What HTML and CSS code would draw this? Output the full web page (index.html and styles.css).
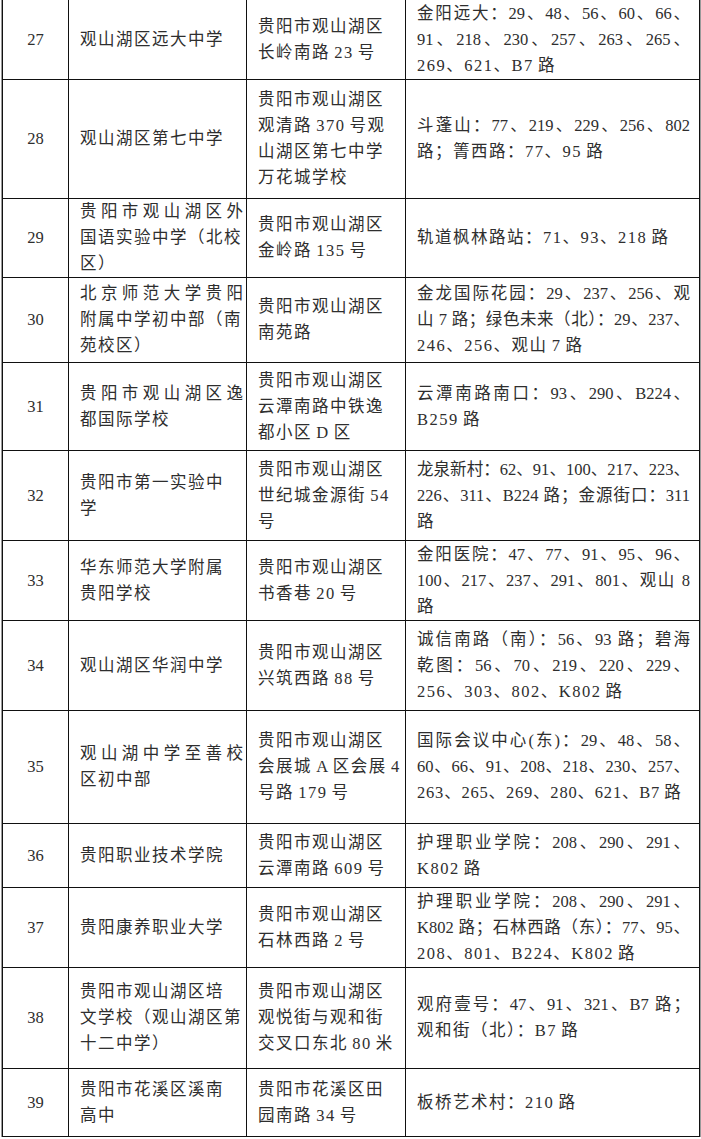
FILE: index.html
```html
<!DOCTYPE html>
<html lang="zh-CN">
<head>
<meta charset="utf-8">
<title>学校周边公交线路</title>
<link rel="stylesheet" href="styles.css">
</head>
<body>
<table class="bus">
  <colgroup>
    <col class="c-no"><col class="c-name"><col class="c-addr"><col class="c-stop">
  </colgroup>
  <tbody>
    <tr>
      <td class="no">27</td>
      <td class="name"><span>观山湖区远大中学</span></td>
      <td class="addr"><span>贵阳市观山湖区</span><span>长岭南路 23 号</span></td>
      <td class="stop"><span class="w">金阳远大：29、48、56、60、66、</span><span class="w">91、218、230、257、263、265、</span><span>269、621、B7 路</span></td>
    </tr>
    <tr>
      <td class="no">28</td>
      <td class="name"><span>观山湖区第七中学</span></td>
      <td class="addr"><span>贵阳市观山湖区</span><span>观清路 370 号观</span><span>山湖区第七中学</span><span>万花城学校</span></td>
      <td class="stop"><span class="w">斗蓬山：77、219、229、256、802</span><span>路；箐西路：77、95 路</span></td>
    </tr>
    <tr>
      <td class="no">29</td>
      <td class="name"><span class="w">贵阳市观山湖区外</span><span>国语实验中学（北校</span><span>区）</span></td>
      <td class="addr"><span>贵阳市观山湖区</span><span>金岭路 135 号</span></td>
      <td class="stop"><span>轨道枫林路站：71、93、218 路</span></td>
    </tr>
    <tr>
      <td class="no">30</td>
      <td class="name"><span class="w">北京师范大学贵阳</span><span>附属中学初中部（南</span><span>苑校区）</span></td>
      <td class="addr"><span>贵阳市观山湖区</span><span>南苑路</span></td>
      <td class="stop"><span class="w">金龙国际花园：29、237、256、观</span><span class="w">山 7 路；绿色未来（北）：29、237、</span><span>246、256、观山 7 路</span></td>
    </tr>
    <tr>
      <td class="no">31</td>
      <td class="name"><span class="w">贵阳市观山湖区逸</span><span>都国际学校</span></td>
      <td class="addr"><span>贵阳市观山湖区</span><span>云潭南路中铁逸</span><span>都小区 D 区</span></td>
      <td class="stop"><span class="w">云潭南路南口：93、290、B224、</span><span>B259 路</span></td>
    </tr>
    <tr>
      <td class="no">32</td>
      <td class="name"><span>贵阳市第一实验中</span><span>学</span></td>
      <td class="addr"><span>贵阳市观山湖区</span><span>世纪城金源街 54</span><span>号</span></td>
      <td class="stop"><span class="w">龙泉新村：62、91、100、217、223、</span><span class="w">226、311、B224 路；金源街口：311</span><span>路</span></td>
    </tr>
    <tr>
      <td class="no">33</td>
      <td class="name"><span>华东师范大学附属</span><span>贵阳学校</span></td>
      <td class="addr"><span>贵阳市观山湖区</span><span>书香巷 20 号</span></td>
      <td class="stop"><span class="w">金阳医院：47、77、91、95、96、</span><span class="w">100、217、237、291、801、观山 8</span><span>路</span></td>
    </tr>
    <tr>
      <td class="no">34</td>
      <td class="name"><span>观山湖区华润中学</span></td>
      <td class="addr"><span>贵阳市观山湖区</span><span>兴筑西路 88 号</span></td>
      <td class="stop"><span class="w">诚信南路（南）：56、93 路；碧海</span><span class="w">乾图：56、70、219、220、229、</span><span>256、303、802、K802 路</span></td>
    </tr>
    <tr>
      <td class="no">35</td>
      <td class="name"><span class="w">观山湖中学至善校</span><span>区初中部</span></td>
      <td class="addr"><span>贵阳市观山湖区</span><span>会展城 A 区会展 4</span><span>号路 179 号</span></td>
      <td class="stop"><span class="w">国际会议中心(东)：29、48、58、</span><span class="w">60、66、91、208、218、230、257、</span><span class="t">263、265、269、280、621、B7 路</span></td>
    </tr>
    <tr>
      <td class="no">36</td>
      <td class="name"><span>贵阳职业技术学院</span></td>
      <td class="addr"><span>贵阳市观山湖区</span><span>云潭南路 609 号</span></td>
      <td class="stop"><span class="w">护理职业学院：208、290、291、</span><span>K802 路</span></td>
    </tr>
    <tr>
      <td class="no">37</td>
      <td class="name"><span>贵阳康养职业大学</span></td>
      <td class="addr"><span>贵阳市观山湖区</span><span>石林西路 2 号</span></td>
      <td class="stop"><span class="w">护理职业学院：208、290、291、</span><span class="w">K802 路；石林西路（东）：77、95、</span><span>208、801、B224、K802 路</span></td>
    </tr>
    <tr>
      <td class="no">38</td>
      <td class="name"><span>贵阳市观山湖区培</span><span>文学校（观山湖区第</span><span>十二中学）</span></td>
      <td class="addr"><span>贵阳市观山湖区</span><span>观悦街与观和街</span><span>交叉口东北 80 米</span></td>
      <td class="stop"><span class="w">观府壹号：47、91、321、B7 路；</span><span>观和街（北）：B7 路</span></td>
    </tr>
    <tr>
      <td class="no">39</td>
      <td class="name"><span>贵阳市花溪区溪南</span><span>高中</span></td>
      <td class="addr"><span>贵阳市花溪区田</span><span>园南路 34 号</span></td>
      <td class="stop"><span>板桥艺术村：210 路</span></td>
    </tr>
  </tbody>
</table>
</body>
</html>
```

FILE: styles.css
```css
html, body {
  margin: 0;
  padding: 0;
  background: #fff;
}

body {
  font-family: "Liberation Serif", "Noto Sans CJK SC", serif;
  color: #2e2e2e;
}

.bus {
  border-collapse: collapse;
  table-layout: fixed;
  width: 697px;
  margin: -1px 0 0 2px;
  font-size: 16.5px;
  line-height: 26px;
  letter-spacing: 1.5px;
  word-spacing: -1.5px;
  box-shadow: -1px 0 0 #9a9a9a, 1px 1px 0 #9a9a9a;
}

.c-no { width: 66px; }
.c-name { width: 178px; }
.c-addr { width: 159px; }
.c-stop { width: 294px; }

.bus td {
  border: 1px solid #111;
  padding: 0;
  vertical-align: middle;
  text-align: left;
  white-space: nowrap;
}

.bus td span {
  display: block;
}

.bus td span.w {
  letter-spacing: 0;
  word-spacing: 0;
  text-align: justify;
  text-align-last: justify;
}

.bus td span.t {
  letter-spacing: 0.8px;
  word-spacing: -0.8px;
}

.bus td.no {
  text-align: center;
  letter-spacing: 0;
  word-spacing: 0;
  font-size: 16.5px;
}

.bus td.name { padding: 0 3px 0 11px; }
.bus td.addr { padding: 0 5px 0 11px; }
.bus td.stop { padding: 0 9px 0 11px; }

.bus tr:nth-child(1) { height: 80px; }
.bus tr:nth-child(2) { height: 119px; }
.bus tr:nth-child(3) { height: 79px; }
.bus tr:nth-child(4) { height: 85px; }
.bus tr:nth-child(5) { height: 88px; }
.bus tr:nth-child(6) { height: 90px; }
.bus tr:nth-child(7) { height: 80px; }
.bus tr:nth-child(8) { height: 90px; }
.bus tr:nth-child(9) { height: 113px; }
.bus tr:nth-child(10) { height: 64px; }
.bus tr:nth-child(11) { height: 80px; }
.bus tr:nth-child(12) { height: 101px; }
.bus tr:nth-child(13) { height: 68px; }
```
